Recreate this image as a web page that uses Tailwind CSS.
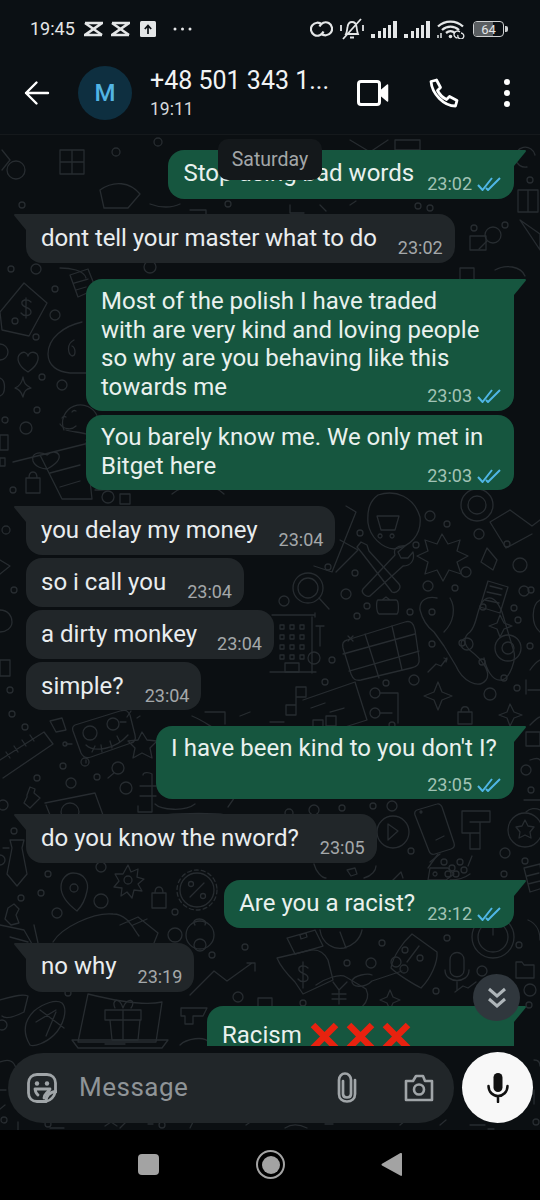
<!DOCTYPE html>
<html lang="en">
<head>
<meta charset="UTF-8">
<title>Chat</title>
<script src="https://cdn.jsdelivr.net/npm/@tailwindcss/browser@4"></script>
</head>
<body class="bg-black">
<div class="w-[540px] h-[1200px] flex flex-col overflow-hidden font-['Roboto',sans-serif] text-[#e9edef]">

  <!-- status bar -->
  <div class="h-[45px] bg-[#0b1014] flex items-center justify-between pl-[30px] pr-[32px] pt-[13px] text-[#e4e6e7]">
    <div class="flex items-center">
      <span class="text-[18px] leading-[24px] w-[54px]">19:45</span>
      <svg class="w-[19px] h-[16px]" viewBox="0 0 19 16" fill="none" stroke="#e4e6e7" stroke-width="2.600"><path d="M1 2h17L1 14h17"/><path d="M1 2l17 12"/></svg>
      <svg class="w-[19px] h-[16px] ml-[8px]" viewBox="0 0 19 16" fill="none" stroke="#e4e6e7" stroke-width="2.600"><path d="M1 2h17L1 14h17"/><path d="M1 2l17 12"/></svg>
      <svg class="w-[16px] h-[16px] ml-[10px]" viewBox="0 0 16 16"><rect width="16" height="16" rx="1.500" fill="#e4e6e7"/><path d="M8 13V5M4.800 8 8 4.600 11.200 8" fill="none" stroke="#0b1014" stroke-width="1.700"/></svg>
      <svg class="w-[19px] h-[4px] ml-[17px]" viewBox="0 0 19 4" fill="#e4e6e7"><circle cx="2" cy="2" r="1.500"/><circle cx="9.500" cy="2" r="1.500"/><circle cx="17" cy="2" r="1.500"/></svg>
    </div>
    <div class="flex items-center">
      <svg class="w-[23px] h-[18px]" viewBox="0 0 23 18" fill="none" stroke="#e4e6e7" stroke-width="2.200"><path d="M12 4.600A6.500 6.500 0 1 0 13.500 11.500"/><path d="M11 13.400A6.500 6.500 0 1 0 9.500 6.500"/></svg>
      <svg class="w-[24px] h-[24px] ml-[7px]" viewBox="0 0 24 24" fill="none" stroke="#e4e6e7" stroke-width="1.800"><path d="M6 17c1-2 1-4 1.500-7C8 6.500 10 5 12 5s4 1.500 4.500 4.500c.4 3 .5 5 1.500 7.500zM10 20.500h4M3 22 21 2M1 8v6M23 8v6"/></svg>
      <svg class="w-[26px] h-[17px] ml-[7px]" viewBox="0 0 26 17" fill="#e4e6e7"><rect x="0" y="13" width="4" height="4"/><rect x="7" y="10" width="3" height="7"/><rect x="12" y="7" width="3" height="10"/><rect x="17" y="4" width="3" height="13"/><rect x="22" y="0" width="4" height="17"/></svg>
      <svg class="w-[26px] h-[17px] ml-[7px]" viewBox="0 0 26 17" fill="#e4e6e7"><rect x="0" y="13" width="4" height="4"/><rect x="7" y="10" width="3" height="7"/><rect x="12" y="7" width="3" height="10"/><rect x="17" y="4" width="3" height="13"/><rect x="22" y="0" width="4" height="17"/></svg>
      <svg class="w-[28px] h-[20px] ml-[7px]" viewBox="0 0 28 20" fill="none" stroke="#e4e6e7" stroke-width="2.300"><path d="M1 7.500C8 1 19 1 26 7.500M5 11c5-4.500 12-4.500 17 0M9 14c3-2.500 6-2.500 9 0"/><circle cx="13.500" cy="17.500" r="1.800" fill="#e4e6e7" stroke="none"/><path d="M1 19v-3M4 19v-5" stroke-width="1.500"/><path d="M23 13a3.500 3.500 0 1 0-2.500 6M21 16a3 3 0 1 0 3-2" stroke-width="1.300"/></svg>
      <div class="ml-[8px] relative w-[31px] h-[16px] rounded-[4px] border border-[#cfd1d2] overflow-hidden flex items-center justify-center">
        <div class="absolute left-0 top-0 bottom-0 w-[19px] bg-[#5a5e61]"></div>
        <span class="relative text-[13px] leading-none text-[#e4e6e7]">64</span>
      </div>
      <div class="w-[3px] h-[6px] bg-[#cfd1d2] ml-[1px] rounded-r-[2px]"></div>
    </div>
  </div>

  <!-- header -->
  <div class="h-[90px] bg-[#0b1014] flex items-center pt-[7px] border-b border-[#15191c]">
    <svg class="w-[26px] h-[26px] ml-[24px]" viewBox="0 0 26 26" fill="none" stroke="#fff" stroke-width="2.400" stroke-linecap="round" stroke-linejoin="round"><path d="M24 13H2M12.500 2.500 2 13l10.500 10.500"/></svg>
    <div class="w-[54px] h-[54px] ml-[28px] rounded-full bg-[#0e2f40] flex items-center justify-center text-[#52b5e4] text-[24px] font-medium">M</div>
    <div class="ml-[18px] w-[190px] -mt-[1px]">
      <div class="text-[25px] leading-[32px] text-[#f1f3f4] whitespace-nowrap">+48 501 343 1...</div>
      <div class="text-[17.500px] leading-[24px] text-[#d6d9db]">19:11</div>
    </div>
    <svg class="w-[32px] h-[26px] ml-[17px]" viewBox="0 0 32 26" fill="none" stroke="#fff" stroke-width="3" stroke-linejoin="round"><rect x="1.500" y="1.500" width="21" height="23" rx="2.500"/><path d="M24 10.500 30.500 5v16L24 15.500z" fill="#fff" stroke-width="1.500"/></svg>
    <svg class="w-[30px] h-[30px] ml-[40px]" viewBox="0 0 30 30" fill="none" stroke="#fff" stroke-width="2.800" stroke-linejoin="round"><path d="M2 3.500 7.500 2l4 7.500-3 3c2 4 5 7 9 9l3-3 7.500 4-1.500 5.500C15 28 3 16 2 3.500z"/></svg>
    <div class="ml-[45px] flex flex-col gap-[5px]">
      <div class="w-[6px] h-[6px] rounded-full bg-white"></div>
      <div class="w-[6px] h-[6px] rounded-full bg-white"></div>
      <div class="w-[6px] h-[6px] rounded-full bg-white"></div>
    </div>
  </div>

  <!-- chat -->
  <div class="relative h-[995px] bg-[#0b0f12] overflow-hidden flex flex-col">
    <!-- wallpaper doodles -->
    <svg class="absolute left-0 top-0 w-[540px] h-[995px]" viewBox="0 135 540 995" fill="none" stroke="#272c30" stroke-width="1.300" stroke-linejoin="round" stroke-linecap="round">
      <!-- top band -->
      <path d="M350 140l20 12 18-12M395 140h25v10h-25zM240 140c10 8 30 8 40 0"/>
      <circle cx="158" cy="142" r="4"/><circle cx="16" cy="170" r="9"/><path d="M60 150h24v24H60zM72 150v24M60 162h24"/><circle cx="116" cy="152" r="4"/>
      <path d="M100 190c14-10 30-8 40 4l-12 14h-24z"/><circle cx="22" cy="205" r="3"/><path d="M2 150l8 10-8 10"/>
      <path d="M535 155a10 10 0 1 0-8 12M518 190h20v22h-20zM528 190v22"/><circle cx="530" cy="180" r="3"/>
      <path d="M520 220l20 14v16zM470 250h16v-14h-16z"/><circle cx="493" cy="235" r="8"/><path d="M487 241l-8 8"/><circle cx="505" cy="225" r="3"/><circle cx="474" cy="228" r="3"/>
      <path d="M150 204c10 4 22 4 30 0M190 210h16v10M290 205v8h14M320 205l6 6M350 205l6-4"/><circle cx="228" cy="204" r="3"/><circle cx="430" cy="208" r="3"/><circle cx="418" cy="206" r="3"/>
      <path d="M460 268h14v12h-14zM495 270c10-6 26-4 30 6M60 268c10 0 24 2 26 10"/><circle cx="150" cy="267" r="6"/><circle cx="11" cy="269" r="3"/><circle cx="36" cy="269" r="5"/>
      <!-- left column -->
      <path d="M24 283 47 303 29 336 2 330 0 312z"/><circle cx="15" cy="321" r="3"/><path d="M26 298v20M31 302c-4-4-10-2-9 2 1 4 9 3 9 8 0 4-7 5-10 1"/>
      <path d="M28 372c-10-6-12-14-8-18 3-3 7-2 8 2 1-4 6-5 9-2 3 5 0 12-9 18z"/><path d="M23 377c1 6 2 8 8 11-5 1-7 3-8 9-2-6-4-8-8-9 5-2 7-5 8-11z"/>
      <path d="M82 322c-18 4-34 16-34 32 0 12 10 18 22 19h16"/><path d="M74 340c-8 4-6 14-2 16 4 0 4-8 0-10"/>
      <path d="M70 275l18-6 8 20-18 8zM74 283l14-4M76 290l10-3"/><circle cx="55" cy="289" r="3"/><circle cx="55" cy="315" r="5"/><circle cx="36" cy="337" r="3"/><circle cx="42" cy="377" r="3"/><circle cx="62" cy="385" r="5"/>
      <path d="M64 430a18 18 0 1 1 22 10"/><path d="M62 418a3 3 0 0 1 4-1M72 412a3 3 0 0 1 4-1M60 424c4 6 12 6 16 2"/>
      <path d="M47 455c-8-4-16-2-14 6 2 6 10 8 14 8 4-2 14-8 12-14-2-4-8-4-12 0zM66 430c6 2 14 2 20 4M13 462l72-18M40 455l22 44h30l-6-56M50 473l30-8M60 487l20-6"/>
      <circle cx="26" cy="428" r="6"/><circle cx="37" cy="410" r="3"/><circle cx="5" cy="420" r="3"/><path d="M0 435h8v15H0zM0 458h5v8H0z"/>
      <path d="M26 478h14v15H26zM29 478c0-8 8-8 8 0"/><circle cx="13" cy="490" r="3"/><path d="M95 490c10 0 20 0 30-6"/><circle cx="108" cy="497" r="6"/>
      <path d="M120 494h10v10h-10zM172 494c14-12 40-12 52 0"/>
      <circle cx="0" cy="352" r="8"/><path d="M0 378c6 2 6 16 0 18"/>
      <circle cx="6" cy="530" r="4"/><path d="M0 560l10 6-10 8M0 610c8 0 12 6 12 12s-6 10-12 10"/><circle cx="14" cy="590" r="3"/><circle cx="10" cy="690" r="3"/><path d="M0 660h10v16H0z"/>
      <!-- middle right of in bubbles -->
      <path d="M378 495c18-6 36 2 42 22 2 18-10 30-26 32-12-1-24-12-26-26-1-14 2-22 10-28z"/><path d="M377 516h22l-4 14h-14zM380 534a2 2 0 1 0 .1 0M392 534a2 2 0 1 0 .1 0"/>
      <circle cx="430" cy="516" r="5"/><circle cx="447" cy="524" r="3"/><circle cx="360" cy="533" r="3"/><path d="M346 506l10 6-24 60-18-6"/><path d="M340 540l18 10-22 22"/>
      <circle cx="477" cy="505" r="16"/><circle cx="477" cy="505" r="9"/><circle cx="479" cy="534" r="5"/>
      <path d="M510 510l22 16 8-6M510 510l-20 12 16 26 26-14"/>
      <circle cx="507" cy="544" r="3"/><circle cx="520" cy="565" r="7"/><path d="M487 548l10 12-4 10-12-8z"/>
      <!-- star burst -->
      <path d="M442 534l6 10 12-4-3 11 11 5-11 6 4 12-12-4-6 11-6-11-12 4 3-12-11-6 11-5-3-11 12 4z"/>
      <circle cx="416" cy="545" r="3"/><circle cx="466" cy="572" r="5"/>
      <!-- wrench -->
      <path d="M395 555c-2-6 2-10 10-9l-7 6 3 6 7 0 5-6c2 8-2 14-10 14l-32 29c-3 4-11-2-8-6z"/><path d="M362 553l-5-6 4-5 6 3 2 6 30 33c3 4-2 10-7 8z"/>
      <circle cx="355" cy="573" r="3"/><circle cx="328" cy="567" r="3"/><circle cx="428" cy="586" r="5"/><circle cx="455" cy="588" r="3"/><circle cx="346" cy="594" r="5"/>
      <circle cx="308" cy="588" r="15"/><circle cx="308" cy="588" r="10"/><path d="M319 598l10 11"/>
      <circle cx="284" cy="601" r="5"/><circle cx="367" cy="606" r="3"/><circle cx="410" cy="612" r="3"/><path d="M378 600h18c3 0 3 12 1 14h-18c-3-2-3-14-1-14zM382 600l4-3 4 3"/><circle cx="357" cy="616" r="3"/>
      <path d="M488 581l20 6-8 26-20-6zM487 592l14 3M485 600l14 3M490 586l12 3"/><circle cx="524" cy="591" r="5"/><circle cx="514" cy="608" r="3"/><circle cx="462" cy="643" r="3"/><circle cx="483" cy="607" r="3"/><circle cx="432" cy="612" r="3"/>
      <!-- table -->
      <path d="M347 640l58-18c6-2 9 2 10 8l4 28c1 6-2 9-8 10l-50 12c-6 1-8-1-10-6l-8-26c-1-4 0-7 4-8z"/><path d="M343 654l72-20M349 671l70-20M365 634l14 44M392 626l10 44M348 636l5 5M353 636l-5 5"/>
      <!-- stethoscope -->
      <path d="M437 598c-10-2-18 2-17 12 2 8 6 16 14 22l10 14 12 20c6 14 22 24 30 14 6-8-6-22-14-28-8-6-10-14-2-20 8-8 6-24 14-32 8-6 14 2 18 12l12 40c2 8-4 26-12 28-10 2-16-12-18-22"/><path d="M450 598c6 10 4 24-6 34"/><circle cx="467" cy="644" r="6"/>
      <path d="M500 615l4 8 8 3-8 3-4 8-3-8-8-3 8-3z"/><circle cx="508" cy="648" r="13"/><circle cx="508" cy="648" r="6"/><circle cx="530" cy="646" r="3"/><circle cx="504" cy="678" r="3"/>
      <circle cx="518" cy="620" r="3"/><circle cx="531" cy="590" r="3"/><path d="M540 600c-8 4-10 24 0 32M530 670c4-6 6-8 10-10M528 690h12M526 680v14"/><circle cx="482" cy="662" r="3"/><circle cx="432" cy="644" r="3"/><path d="M428 672l8-8 5 2 6-8M444 658l3 1-1 3"/>
      <!-- building -->
      <path d="M272 615h42M315 613v4M312 617v56M270 672h46M316 626h5M320 626v20M324 626h-8"/><circle cx="314" cy="658" r="6"/>
      <path d="M280 625h4v4h-4zM290 625h4v4h-4zM300 625h4v4h-4zM280 635h4v4h-4zM290 635h4v4h-4zM300 635h4v4h-4zM280 645h4v4h-4zM290 645h4v4h-4zM300 645h4v4h-4zM280 655h4v4h-4zM290 655h4v4h-4zM300 655h4v4h-4zM285 663h14v9h-14z"/>
      <circle cx="332" cy="660" r="3"/><circle cx="325" cy="682" r="3"/>
      <!-- bottom right mid -->
      <path d="M286 705h10v-18h10v10h-10M286 705v10h10v-10z"/><path d="M303 700l52-18 12 38-44 14"/><path d="M311 708l14-5M330 712l14-4M313 720h10v10h-10zM326 716h10v10h-10z"/>
      <circle cx="375" cy="693" r="5"/><circle cx="375" cy="713" r="5"/><path d="M380 693h18v30M380 713h12"/><circle cx="386" cy="683" r="3"/><circle cx="414" cy="680" r="5"/><circle cx="392" cy="725" r="3"/>
      <path d="M438 682l4 10 10 4-10 4-4 10-4-10-10-4 10-4z"/><circle cx="490" cy="694" r="6"/><circle cx="517" cy="688" r="3"/>
      <path d="M458 712h14v12h-14zM461 712c0-7 8-7 8 0"/><path d="M510 704l4 8 8 3-8 3-4 8-3-8-8-3 8-3z"/><path d="M530 725c4-4 8-8 10-8"/>
      <path d="M205 712h20v12M240 716l10-4M270 722h14M192 716c10 4 18 10 20 11M390 738l6 4M120 722l6 0"/>
      <!-- far right band -->
      <path d="M526 732h14v14h-14zM530 760c6-2 8-2 10 0"/><circle cx="526" cy="770" r="5"/><circle cx="531" cy="790" r="3"/><path d="M524 800h16M526 812a12 12 0 0 1 14-2"/>
      <!-- row under out4 -->
      <circle cx="289" cy="813" r="4"/><circle cx="314" cy="810" r="5"/><circle cx="342" cy="808" r="3"/><circle cx="392" cy="806" r="5"/><circle cx="373" cy="806" r="3"/>
      <circle cx="393" cy="832" r="16"/><path d="M388 824l10 7-10 9z"/><circle cx="411" cy="851" r="3"/>
      <path d="M417 810l20-6c3-1 4 1 5 3l12 36c1 3 0 5-3 6l-16 5c-3 1-5 0-6-3l-14-36c-1-3 0-4 2-5z"/><path d="M436 840l8-4"/><circle cx="421" cy="812" r="1"/>
      <path d="M462 811h28v11h-10v27h-10v-16h-8zM470 822h10M470 833h10"/>
      <circle cx="525" cy="830" r="17"/><path d="M525 820l3 6 6 1-4 5 1 6-6-3-6 3 1-6-4-5 6-1z"/><circle cx="505" cy="853" r="5"/><circle cx="525" cy="861" r="3"/><circle cx="504" cy="874" r="3"/><path d="M524 868l16-4 3 24-13 4z M527 876l12-3M528 884l12-3"/>
      <path d="M430 868h18l6 6-8 6h-18zM435 872a2 2 0 1 0 .1 0"/><path d="M428 868l10-14"/>
      <circle cx="444" cy="862" r="3"/><circle cx="452" cy="868" r="3"/><circle cx="460" cy="862" r="3"/><circle cx="448" cy="874" r="3"/><circle cx="456" cy="874" r="3"/><circle cx="464" cy="870" r="3"/><path d="M430 862l10-8M472 856l-4 10M470 874c-4 3-10 6-20 6"/>
      <path d="M393 880l8-8 2 6M393 880l-8 6"/><path d="M347 870l8-2 2 6-6 2zM314 864c2 8 8 14 12 14M376 866c0 4-4 10-12 12"/>
      <!-- below out5 -->
      <path d="M287 938l28-8 8 16-28 8zM300 935l6-2 1 4-6 2z"/><path d="M320 930c2 14 14 20 24 18 8-2 16-8 18-18M340 932l6 16"/><circle cx="382" cy="943" r="3"/>
      <path d="M412 934l25 18c1 10-6 26-16 36-2-1-22-12-30-20 2-12 12-26 21-34z"/><circle cx="405" cy="950" r="3"/><circle cx="420" cy="958" r="3"/><path d="M407 962l12-16"/>
      <circle cx="396" cy="962" r="5"/><circle cx="347" cy="963" r="3"/><circle cx="371" cy="963" r="5"/>
      <circle cx="447" cy="938" r="3"/>
      <circle cx="493" cy="937" r="21"/><circle cx="493" cy="937" r="15"/><path d="M493 923v12"/>
      <path d="M450 960c0-10 14-10 14 0v10c0 9-14 9-14 0zM445 970c0 14 24 14 24 0M457 982v8"/>
      <path d="M516 962h6l2 3h10v13h-18z"/><circle cx="482" cy="971" r="5"/><path d="M528 920c10 4 12 14 12 20"/><circle cx="530" cy="990" r="6"/><circle cx="519" cy="945" r="3"/>
      <path d="M277 958l34-8c8-1 14 4 17 10l5 20-30 14-8-12c-6-6-14-14-18-24z"/><path d="M303 962v26M308 968c-4-4-10-2-9 2 1 4 9 3 9 8 0 4-7 5-10 1"/>
      <path d="M316 985c8-6 24-12 30-8l20 12c4 8 0 14-4 18h-50"/><path d="M333 982l6 8 8-8M339 990v14M332 994h14M332 999h14"/>
      <path d="M372 975c-4-2-18 0-20 6-1 6 12 8 20 0l30-10"/><circle cx="404" cy="969" r="4"/><path d="M390 990l3 7 7 3-7 3-3 7-3-7-7-3 7-3z"/>
      <circle cx="303" cy="1003" r="3"/><circle cx="436" cy="991" r="3"/><path d="M455 992l8-6 5 2 8-6"/>
      <!-- left lower -->
      <path d="M0 760l44-28 9 12-50 34M6 752l4 6M14 746l4 6M22 740l4 6M30 735l4 6"/><circle cx="12" cy="714" r="3"/><circle cx="25" cy="727" r="3"/><path d="M50 721l12-3 4 12-10 2z"/>
      <circle cx="63" cy="766" r="3"/><circle cx="37" cy="778" r="3"/><circle cx="71" cy="783" r="5"/><circle cx="97" cy="777" r="3"/><circle cx="126" cy="788" r="6"/>
      <path d="M75 725l45-14c6-2 8 0 10 4l5 20c1 4 0 7-4 8l-40 14c-5 2-8 0-10-4l-8-22c-1-3 0-5 2-6z"/><circle cx="90" cy="733" r="7"/><circle cx="113" cy="724" r="6"/><path d="M86 745c8 8 30 4 42-10M92 752l3-6M102 752l-1-7M112 748l-2-7M120 742l-3-6M72 744h-6M86 760v3"/><circle cx="85" cy="762" r="4"/><circle cx="65" cy="744" r="2"/><path d="M127 717l4-6M137 718l3-2"/>
      <circle cx="118" cy="768" r="6"/><path d="M114 773l-6 5"/>
      <path d="M142 732l5 8 10 1-7 7 2 10-10-5-9 5 2-10-7-7 10-1z"/>
      <path d="M143 775c0-3 6-3 9-1v38h-14v-6M140 786h16M140 796h16M155 804c6 6 30 8 40 0"/><path d="M165 815c20-2 50-2 60 0M228 735c14 20 18 50 0 72"/>
      <path d="M45 803l50-10 8 22M50 815l-4-10"/><circle cx="70" cy="812" r="9"/>
      <path d="M27 795l3-8 5 2-1 4 6 5-10 10-6-5 3-6z"/><circle cx="14" cy="831" r="3"/><circle cx="3" cy="805" r="5"/>
      <path d="M10 840h14l-2 8 5 26-10 12-10-12 5-26zM3 848l6 0"/><circle cx="0" cy="860" r="5"/>
      <circle cx="48" cy="874" r="3"/><circle cx="41" cy="893" r="3"/><circle cx="21" cy="898" r="3"/><circle cx="57" cy="913" r="5"/><circle cx="175" cy="912" r="3"/><circle cx="101" cy="867" r="5"/>
      <path d="M73 873c12 0 16 10 14 18-2 10-6 16-10 20-8-6-16-14-16-24 0-8 6-14 12-14z"/><circle cx="74" cy="888" r="4"/><circle cx="101" cy="901" r="7"/>
      <path d="M128 865l3 7 7-3-1 8 7 2-6 5 4 7-8-1-2 8-5-6-6 4 1-8-8-1 5-6-4-7 8 0z"/><circle cx="128" cy="880" r="4"/>
      <path d="M152 893h14v15h-14zM155 893c0-8 8-8 8 0"/>
      <circle cx="197" cy="890" r="17"/><circle cx="197" cy="890" r="20" stroke-dasharray="4 3"/><path d="M190 897l14-14"/><circle cx="191" cy="884" r="2.500"/><circle cx="203" cy="896" r="2.500"/>
      <path d="M8 908l6-4 5 5-3 6 3 8-8 2-6-6zM0 925l24 5 8 14M10 937l18 5"/><path d="M34 925l4 18"/>
      <path d="M53 942c8-14 40-30 60-28 14 0 20 14 26 22M120 925l18-8 20 16-4 10M133 925l14-6"/>
      <circle cx="175" cy="935" r="7"/><circle cx="200" cy="935" r="14"/><circle cx="200" cy="945" r="6"/><path d="M195 925c-6-8 14-8 10 0"/><circle cx="245" cy="947" r="3"/><circle cx="212" cy="955" r="3"/>
      <!-- bottom -->
      <path d="M88 994l-10 48h78l6-40c-18 4-50-2-74-8z"/><path d="M72 1040h96l-6 8H78zM105 1044h20"/>
      <path d="M105 1010h36v10h-36zM110 1020l2 20h26l2-20M123 1010v30M115 1008c-4-8 4-12 8 0 4-12 14-8 8 0"/>
      <path d="M30 1045c-6-10-8-22 4-34 10-8 22-12 28-8 6 6 2 22-8 32-8 8-20 12-24 10zM40 1010l24 18M36 1022l20-12M46 1036l10-24"/>
      <path d="M0 1000c12-4 24-6 28-4l-4 16c-8 4-18 8-22 4"/><circle cx="2" cy="1025" r="5"/><circle cx="68" cy="993" r="3"/>
      <path d="M190 995l24-24 13 10 25-18M247 963h8v8"/><circle cx="238" cy="997" r="5"/><path d="M258 998h14v14h-14zM181 1008h26l-4 8h-10v8h-8v-8h-4z"/>
      <path d="M210 1032h26M180 1045c6-6 24-10 30-2"/><path d="M228 1024l8 6 14-4M270 1040c4-4 8-10 8-20"/><circle cx="292" cy="1023" r="6"/><path d="M440 1024h30M402 1024l10 18"/><circle cx="529" cy="1005" r="3"/>
      <path d="M0 1062c10-4 14 0 16 6M0 1090h6M5 1105l-5 4M18 1130v-8M50 1128h14M105 1126l6-4 6 4M120 1128l6-6M148 1124h5M190 1128l4-8M246 1125l6-4M285 1128c6-4 14-4 22 0M325 1124h8M400 1125l5-4M440 1125l6-5M494 1129h-6M534 1090v14M534 1060c4 0 6 2 6 6M470 1125h15"/>
      <circle cx="4" cy="1120" r="3"/><circle cx="536" cy="1122" r="3"/><circle cx="162" cy="1125" r="3"/><circle cx="48" cy="1124" r="3"/>
    </svg>

    <!-- messages -->
    <div class="relative h-[911px] overflow-hidden pt-[15px] text-[24px] leading-[29px] flex flex-col shrink-0">
      <div class="relative self-end mr-[26px] bg-[#16563f] rounded-[16px] rounded-tr-none pl-[15px] pr-[13px] pt-[9px] pb-[11px] flex items-end gap-[13px] text-[#e9f1ee]">
        <span class="whitespace-nowrap">Stop using bad words</span>
        <span class="flex items-center gap-[5px] -mb-[6px] text-[18px] leading-[20px] text-[#a1c3b5]">23:02<svg class="w-[24px] h-[14px]" viewBox="0 0 24 14" fill="none" stroke="#4fb6e6" stroke-width="2"><path d="M1 8l4.500 5L15 1M9 11l2 2L23 1"/></svg></span>
        <svg class="absolute -right-[12px] top-0 w-[12px] h-[16px]" viewBox="0 0 12 16" fill="#16563f"><path d="M0 0h10.500c1.500 0 1.800 1 1 2L0 16z"/></svg>
      </div>
      <div class="relative self-start ml-[26px] mt-[15px] bg-[#212629] rounded-[16px] rounded-tl-none pl-[15px] pr-[12px] pt-[10px] pb-[10px] flex items-end gap-[21px]">
        <span class="whitespace-nowrap tracking-[-.08px]">dont tell your master what to do</span>
        <span class="-mb-[5px] text-[18px] leading-[20px] text-[#a4a8aa]">23:02</span>
        <svg class="absolute -left-[12px] top-0 w-[12px] h-[16px]" viewBox="0 0 12 16" fill="#212629"><path d="M12 0H1.500C0 0-.3 1 .5 2L12 16z"/></svg>
      </div>
      <div class="relative self-end mr-[26px] mt-[16px] w-[428px] bg-[#16563f] rounded-[16px] rounded-tr-none pl-[15px] pr-[13px] pt-[8px] pb-[5px] text-[#e9f1ee]">
        <div class="whitespace-nowrap leading-[28.700px]">Most of the polish I have traded<br>with are very kind and loving people<br>so why are you behaving like this<br>towards me</div>
        <div class="flex justify-end items-center gap-[5px] -mt-[16px] text-[18px] leading-[20px] text-[#a1c3b5]">23:03<svg class="w-[24px] h-[14px]" viewBox="0 0 24 14" fill="none" stroke="#4fb6e6" stroke-width="2"><path d="M1 8l4.500 5L15 1M9 11l2 2L23 1"/></svg></div>
        <svg class="absolute -right-[12px] top-0 w-[12px] h-[16px]" viewBox="0 0 12 16" fill="#16563f"><path d="M0 0h10.500c1.500 0 1.800 1 1 2L0 16z"/></svg>
      </div>
      <div class="self-end mr-[26px] mt-[4px] w-[428px] bg-[#16563f] rounded-[16px] pl-[15px] pr-[13px] pt-[8px] pb-[4px] text-[#e9f1ee]">
        <div class="whitespace-nowrap leading-[28.700px]">You barely know me. We only met in<br>Bitget here</div>
        <div class="flex justify-end items-center gap-[5px] -mt-[14px] text-[18px] leading-[20px] text-[#a1c3b5]">23:03<svg class="w-[24px] h-[14px]" viewBox="0 0 24 14" fill="none" stroke="#4fb6e6" stroke-width="2"><path d="M1 8l4.500 5L15 1M9 11l2 2L23 1"/></svg></div>
      </div>
      <div class="relative self-start ml-[26px] mt-[16px] bg-[#212629] rounded-[16px] rounded-tl-none pl-[15px] pr-[12px] pt-[10px] pb-[10px] flex items-end gap-[21px]">
        <span class="whitespace-nowrap">you delay my money</span>
        <span class="-mb-[5px] text-[18px] leading-[20px] text-[#a4a8aa]">23:04</span>
        <svg class="absolute -left-[12px] top-0 w-[12px] h-[16px]" viewBox="0 0 12 16" fill="#212629"><path d="M12 0H1.500C0 0-.3 1 .5 2L12 16z"/></svg>
      </div>
      <div class="self-start ml-[26px] mt-[3px] bg-[#212629] rounded-[16px] pl-[15px] pr-[12px] pt-[10px] pb-[10px] flex items-end gap-[21px]">
        <span class="whitespace-nowrap">so i call you</span>
        <span class="-mb-[5px] text-[18px] leading-[20px] text-[#a4a8aa]">23:04</span>
      </div>
      <div class="self-start ml-[26px] mt-[3px] bg-[#212629] rounded-[16px] pl-[15px] pr-[12px] pt-[10px] pb-[10px] flex items-end gap-[20px]">
        <span class="whitespace-nowrap">a dirty monkey</span>
        <span class="-mb-[5px] text-[18px] leading-[20px] text-[#a4a8aa]">23:04</span>
      </div>
      <div class="self-start ml-[26px] mt-[3px] bg-[#212629] rounded-[16px] pl-[15px] pr-[12px] pt-[10px] pb-[9px] flex items-end gap-[21px]">
        <span class="whitespace-nowrap">simple?</span>
        <span class="-mb-[5px] text-[18px] leading-[20px] text-[#a4a8aa]">23:04</span>
      </div>
      <div class="relative self-end mr-[26px] mt-[16px] bg-[#16563f] rounded-[16px] rounded-tr-none pl-[15px] pr-[17px] pt-[8px] pb-[4px] text-[#e9f1ee]">
        <div class="whitespace-nowrap tracking-[.06px]">I have been kind to you don't I?</div>
        <div class="flex justify-end items-center gap-[5px] -mr-[4px] mt-[12px] text-[18px] leading-[20px] text-[#a1c3b5]">23:05<svg class="w-[24px] h-[14px]" viewBox="0 0 24 14" fill="none" stroke="#4fb6e6" stroke-width="2"><path d="M1 8l4.500 5L15 1M9 11l2 2L23 1"/></svg></div>
        <svg class="absolute -right-[12px] top-0 w-[12px] h-[16px]" viewBox="0 0 12 16" fill="#16563f"><path d="M0 0h10.500c1.500 0 1.800 1 1 2L0 16z"/></svg>
      </div>
      <div class="relative self-start ml-[26px] mt-[15px] bg-[#212629] rounded-[16px] rounded-tl-none pl-[15px] pr-[12px] pt-[10px] pb-[10px] flex items-end gap-[21px]">
        <span class="whitespace-nowrap">do you know the nword?</span>
        <span class="-mb-[5px] text-[18px] leading-[20px] text-[#a4a8aa]">23:05</span>
        <svg class="absolute -left-[12px] top-0 w-[12px] h-[16px]" viewBox="0 0 12 16" fill="#212629"><path d="M12 0H1.500C0 0-.3 1 .5 2L12 16z"/></svg>
      </div>
      <div class="relative self-end mr-[26px] mt-[17px] bg-[#16563f] rounded-[16px] rounded-tr-none pl-[15px] pr-[13px] pt-[9px] pb-[10px] flex items-end gap-[12px] text-[#e9f1ee]">
        <span class="whitespace-nowrap">Are you a racist?</span>
        <span class="flex items-center gap-[5px] -mb-[6px] text-[18px] leading-[20px] text-[#a1c3b5]">23:12<svg class="w-[24px] h-[14px]" viewBox="0 0 24 14" fill="none" stroke="#4fb6e6" stroke-width="2"><path d="M1 8l4.500 5L15 1M9 11l2 2L23 1"/></svg></span>
        <svg class="absolute -right-[12px] top-0 w-[12px] h-[16px]" viewBox="0 0 12 16" fill="#16563f"><path d="M0 0h10.500c1.500 0 1.800 1 1 2L0 16z"/></svg>
      </div>
      <div class="relative self-start ml-[26px] mt-[15px] bg-[#212629] rounded-[16px] rounded-tl-none pl-[15px] pr-[12px] pt-[9px] pb-[11px] flex items-end gap-[21px]">
        <span class="whitespace-nowrap">no why</span>
        <span class="-mb-[6px] text-[18px] leading-[20px] text-[#a4a8aa]">23:19</span>
        <svg class="absolute -left-[12px] top-0 w-[12px] h-[16px]" viewBox="0 0 12 16" fill="#212629"><path d="M12 0H1.500C0 0-.3 1 .5 2L12 16z"/></svg>
      </div>
      <div class="relative self-end mr-[26px] mt-[14px] w-[307px] h-[60px] shrink-0 bg-[#16563f] rounded-[16px] rounded-tr-none pl-[15px] pt-[15px] flex items-start text-[#e9f1ee]">
        <span class="whitespace-nowrap">Racism</span>
        <div class="flex gap-[7px] ml-[8px] mt-[1px]">
          <svg class="w-[29px] h-[29px]" viewBox="0 0 29 29"><path d="M3 3 26 26M26 3 3 26" stroke="#e8220f" stroke-width="6.500"/></svg>
          <svg class="w-[29px] h-[29px]" viewBox="0 0 29 29"><path d="M3 3 26 26M26 3 3 26" stroke="#e8220f" stroke-width="6.500"/></svg>
          <svg class="w-[29px] h-[29px]" viewBox="0 0 29 29"><path d="M3 3 26 26M26 3 3 26" stroke="#e8220f" stroke-width="6.500"/></svg>
        </div>
        <svg class="absolute -right-[12px] top-0 w-[12px] h-[16px]" viewBox="0 0 12 16" fill="#16563f"><path d="M0 0h10.500c1.500 0 1.800 1 1 2L0 16z"/></svg>
      </div>
    </div>

    <!-- date chip -->
    <div class="absolute left-[218px] top-[4px] w-[104px] h-[41px] rounded-[10px] bg-[#14181b] flex items-center justify-center text-[19.500px] text-[#a2a6a8]">Saturday</div>

    <!-- scroll to bottom -->
    <div class="absolute left-[473px] top-[839px] w-[47px] h-[47px] rounded-full bg-[#30373d] flex items-center justify-center">
      <svg class="w-[20px] h-[22px]" viewBox="0 0 20 22" fill="none" stroke="#aeb5b9" stroke-width="3"><path d="M2 2l8 7 8-7M2 12l8 7 8-7"/></svg>
    </div>

    <!-- composer -->
    <div class="relative flex items-center gap-[8px] pl-[8px] pr-[7px] mt-[6px]">
      <div class="w-[446px] h-[70px] rounded-[35px] bg-[#212629] flex items-center">
        <svg class="w-[30px] h-[30px] ml-[19px]" viewBox="0 0 30 30" fill="none" stroke="#a0a5a8" stroke-width="2.800" stroke-linejoin="round" stroke-linecap="round"><path d="M19 28.500H10C5 28.500 1.500 25 1.500 20V10C1.500 5 5 1.500 10 1.500h10c5 0 8.500 3.500 8.500 8.500v8.500C27 24 23.500 27.500 19 28.500z"/><path d="M19 28.500c0-6 3.500-9.500 10.500-10"/><path d="M8 16h15c-1 2-2 3-3.500 4-1.500 1.500-2.500 3-2.500 5M11 22c-1.500-1-2.500-3-3-6"/><circle cx="10" cy="10.500" r="2.200" fill="#a0a5a8" stroke="none"/><circle cx="20" cy="10.500" r="2.200" fill="#a0a5a8" stroke="none"/></svg>
        <span class="ml-[22px] text-[26px] text-[#8f9497] tracking-[.5px]">Message</span>
        <svg class="w-[20px] h-[31px] ml-[149px]" viewBox="0 0 20 31" fill="none" stroke="#a0a5a8" stroke-width="2.700" stroke-linecap="round"><path d="M18 8v14c0 4.800-3.500 7.500-8 7.500S2 26.800 2 22V8c0-3.800 2.700-6.500 6-6.500S14 4.200 14 8v14c0 2.200-1.700 3.500-4 3.500S6 24.200 6 22V9"/></svg>
        <svg class="w-[30px] h-[28px] ml-[47px]" viewBox="0 0 30 28" fill="none" stroke="#a0a5a8" stroke-width="2.600" stroke-linejoin="round"><path d="M2 7h7l3-5h7l2 5h7v19H2z"/><circle cx="15" cy="15.500" r="5"/></svg>
      </div>
      <div class="w-[71px] h-[71px] rounded-full bg-[#f8f8f8] flex items-center justify-center">
        <svg class="w-[22px] h-[30px]" viewBox="0 0 22 30" fill="none" stroke="#111" stroke-width="2.500" stroke-linecap="round"><rect x="6.500" y="0" width="9" height="19" rx="4.500" fill="#111" stroke="none"/><path d="M1.500 13c0 6 4.500 10 9.500 10s9.500-4 9.500-10M11 23v6"/></svg>
      </div>
    </div>
  </div>

  <!-- nav bar -->
  <div class="h-[70px] bg-black flex items-center justify-center pb-[1px] shrink-0">
    <div class="w-[21px] h-[21px] rounded-[4px] bg-[#a3a3a3]"></div>
    <div class="w-[29px] h-[29px] ml-[97px] rounded-full border-[2.500px] border-[#a3a3a3] flex items-center justify-center">
      <div class="w-[18px] h-[18px] rounded-full bg-[#a3a3a3]"></div>
    </div>
    <svg class="w-[21px] h-[25px] ml-[96px]" viewBox="0 0 21 25" fill="#a3a3a3"><path d="M20 1c.6 0 1 .4 1 1v21c0 .8-.7 1.200-1.300.8L1 13.500c-.7-.5-.7-1.200 0-1.700L19 1.200c.3-.1.700-.2 1-.2z"/></svg>
  </div>
</div>
</body>
</html>
